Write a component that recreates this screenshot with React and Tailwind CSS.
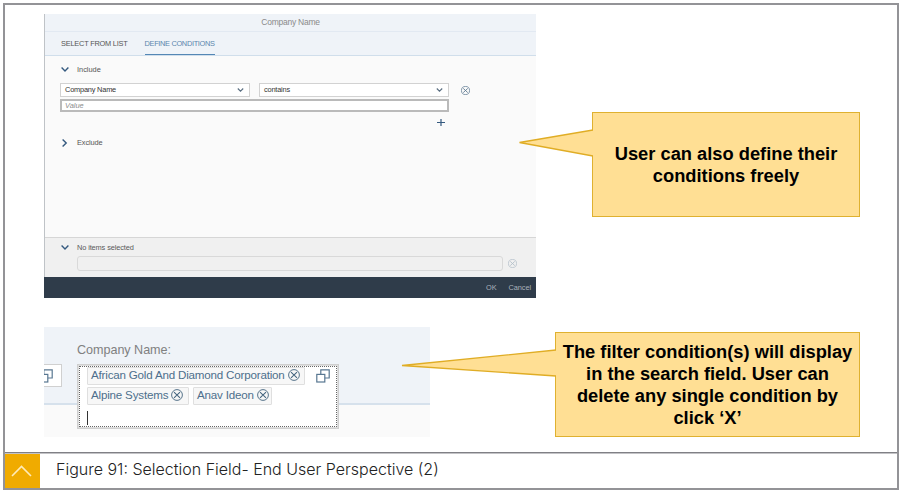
import React from "react";

function ChevronDown({ className = "w-[8px] h-[5px]", color = "#34597f", w = 1.4 }) {
  return (
    <svg className={className} viewBox="0 0 8 5" fill="none" stroke={color} strokeWidth={w}>
      <path d="M0.6 0.6 L4 4 L7.4 0.6" />
    </svg>
  );
}

function CircleX({ className, color = "#5c7890", w = 0.9 }) {
  return (
    <svg className={className} viewBox="0 0 12 12" fill="none" stroke={color} strokeWidth={w}>
      <circle cx="6" cy="6" r="5.4" />
      <path d="M3 3.2 L9 8.8 M9 3.2 L3 8.8" strokeWidth={w * 1.2} />
    </svg>
  );
}

function ValueHelp({ className }) {
  return (
    <svg className={className} viewBox="0 0 14 14" fill="none" stroke="#587791" strokeWidth="1.2">
      <path d="M4.8 5.4 V0.8 H13.2 V9 H8.8" />
      <rect x="0.8" y="5.4" width="8" height="7.6" />
    </svg>
  );
}

function Select({ label }) {
  return (
    <div className="flex h-[14px] w-[190px] items-center justify-between border border-[#d2d2d2] bg-white pr-[5px] pl-[4px]">
      <span className="text-[7.4px] leading-none tracking-[-0.2px] text-[#333]">{label}</span>
      <ChevronDown className="h-[4px] w-[7px]" color="#5b6f82" w={1.4} />
    </div>
  );
}

function Token({ children, className }) {
  return (
    <div className={`flex h-[18px] items-center gap-[3px] rounded-[1px] border border-[#dfdfdf] bg-[#f7f7f7] pb-[2px] pl-[3px] whitespace-nowrap ${className}`}>
      <span className="text-[11.6px] leading-none tracking-[-0.19px] text-[#4d6f8c]">{children}</span>
      <CircleX className="h-[12px] w-[12px] shrink-0" color="#45657f" w={0.9} />
    </div>
  );
}

function DefineConditionsDialog() {
  return (
    <div className="flex h-[284px] w-[492px] shrink-0 flex-col border-l border-[#bfc3c7] bg-[#fafafa]">
      <div className="flex h-[17px] shrink-0 items-center justify-center bg-[#eff3f8] text-[8.5px] leading-none tracking-[-0.25px] text-[#8a8a8a]">
        <span>Company Name</span>
      </div>
      <div className="flex h-[25px] shrink-0 gap-[16.5px] border-t border-b border-t-[#e2e9f2] border-b-[#d0deeb] bg-[#eff3f8] pl-[16px] text-[7.4px] leading-none tracking-[-0.22px]">
        <span className="w-[67px] pt-[8px] whitespace-nowrap text-[#555]">SELECT FROM LIST</span>
        <span className="w-[70px] border-b border-[#5487b5] pt-[8px] tracking-[-0.32px] whitespace-nowrap text-[#5b86ad]">DEFINE CONDITIONS</span>
      </div>

      <div className="flex h-[181px] shrink-0 flex-col pl-[15px] text-[7.4px] leading-none tracking-[-0.2px] text-[#555]">
        <div className="mt-[10px] flex h-[7px] items-center gap-[8px] pl-px">
          <ChevronDown />
          <span className="tracking-normal">Include</span>
        </div>
        <div className="mt-[10px] flex items-center">
          <Select label="Company Name" />
          <div className="w-[9px]" />
          <Select label="contains" />
          <CircleX className="ml-[12px] h-[9px] w-[9px]" w={1} />
        </div>
        <div className="mt-[2px] flex h-[13px] w-[389px] items-center border-2 border-[#bababa] bg-white pl-[3px] tracking-normal italic text-[#8c8c8c]">
          Value
        </div>
        <svg className="mt-[7px] ml-[377px] h-[7px] w-[8px]" viewBox="0 0 8 7" stroke="#34597f" strokeWidth="1.2">
          <path d="M0 3.5 H8 M4 0 V7" />
        </svg>
        <div className="mt-[13px] flex h-[7px] items-center gap-[8px] pl-px">
          <svg className="h-[8px] w-[8px]" viewBox="0 0 8 8" fill="none" stroke="#34597f" strokeWidth="1.4">
            <path d="M1.6 0.6 L5.2 4 L1.6 7.4" />
          </svg>
          <span className="tracking-[-0.1px]">Exclude</span>
        </div>
      </div>

      <div className="h-[40px] shrink-0 border-t border-[#d6d6d6] bg-[#f0f0f0] pl-[16px]">
        <div className="mt-[6px] flex h-[7px] items-center gap-[8px] text-[7.4px] leading-none tracking-[-0.12px] text-[#5a5a5a]">
          <ChevronDown />
          <span>No items selected</span>
        </div>
        <div className="mt-[5px] flex items-center gap-[5px] pl-[16px]">
          <div className="h-[15px] w-[426px] rounded-[3px] border border-[#d9d9d9]" />
          <CircleX className="h-[9px] w-[9px]" color="#b3bfca" w={1} />
        </div>
      </div>

      <div className="-ml-px flex h-[21px] shrink-0 items-center justify-end gap-[12px] bg-[#2f3c4a] pr-[5px] text-[7.4px] leading-none tracking-[-0.1px] text-[#a9b1ba]">
        <span>OK</span>
        <span>Cancel</span>
      </div>
    </div>
  );
}

function SearchField() {
  return (
    <div className="flex h-[110px] w-[386px] shrink-0 bg-[linear-gradient(to_bottom,#eff3f8_76px,#d6e1ec_76px,#d6e1ec_78px,#fafafa_78px)]">
      <div className="mt-[37px] flex h-[23px] w-[18px] items-center overflow-hidden border border-l-0 border-[#d0d0d0] bg-white">
        <ValueHelp className="-ml-[5px] h-[14px] w-[14px] shrink-0" />
      </div>
      <div className="ml-[15px] w-[262px] pt-[17px]">
        <div className="h-[20px] text-[12.6px] leading-[13px] tracking-[-0.04px] text-[#808080]">Company Name:</div>
        <div className="h-[65px] border border-[#cfcfcf] bg-[#dedede] p-px">
          <div className="flex h-full justify-between border border-dotted border-[#666] bg-white pr-[6px] pl-[7px]">
            <div className="flex w-[220px] flex-col">
              <Token className="w-[218px]">African Gold And Diamond Corporation</Token>
              <div className="mt-[2px] flex gap-[4px]">
                <Token className="w-[102px]">Alpine Systems</Token>
                <Token className="w-[79px]">Anav Ideon</Token>
              </div>
              <div className="mt-[6px] h-[14px] w-px bg-[#333]" />
            </div>
            <ValueHelp className="mt-[2px] h-[14px] w-[14px]" />
          </div>
        </div>
      </div>
    </div>
  );
}

function FreeConditionsCallout() {
  return (
    <div className="relative mt-[98px] ml-[56px] flex h-[105px] w-[268px] items-center justify-center border border-[#dfb130] bg-[#ffdf94] pt-[1px] text-center text-[18.3px] leading-[22px] font-bold text-black">
      <svg className="absolute top-[16px] -left-[75px] h-[28px] w-[75px]" viewBox="0 0 75 28" fill="#ffdf94" stroke="#e0ad25" strokeWidth="1.3">
        <path d="M75 1 L1.5 13.5 L75 27" />
      </svg>
      <p>
        User can also define their
        <br />
        conditions freely
      </p>
    </div>
  );
}

function FilterCallout() {
  return (
    <div className="relative mt-[5px] ml-[125px] flex h-[105px] w-[305px] items-center justify-center border border-[#dfb130] bg-[#ffdf94] text-center text-[18.3px] leading-[22px] font-bold whitespace-nowrap text-black">
      <svg className="absolute top-[16px] -left-[156px] h-[28px] w-[156px]" viewBox="0 0 156 28" fill="#ffdf94" stroke="#e0ad25" strokeWidth="1.3">
        <path d="M156 1 L2 16.5 L156 27" />
      </svg>
      <p>
        The filter condition(s) will display
        <br />
        in the search field. User can
        <br />
        delete any single condition by
        <br />
        click ‘X’
      </p>
    </div>
  );
}

export default function App() {
  return (
    <div className="h-[493px] w-[901px] overflow-hidden bg-white pt-[3px] pl-[3px] font-['Liberation_Sans',Arial,sans-serif]">
      <div className="flex h-[487px] w-[896px] flex-col border-2 border-[#939397]">
        <div className="h-[447px] shrink-0 pt-[9px] pl-[39px]">
          <div className="flex">
            <DefineConditionsDialog />
            <FreeConditionsCallout />
          </div>
          <div className="mt-[29px] flex">
            <SearchField />
            <FilterCallout />
          </div>
        </div>
        <div className="h-px bg-[#808085]" />
        <div className="h-px bg-[#c3c3c6]" />
        <div className="flex flex-1 items-stretch">
          <div className="flex w-[35px] items-center justify-center bg-[#f0ab00] pr-[2px]">
            <svg className="h-[12px] w-[21px]" viewBox="0 0 21 12" fill="none" stroke="#ffebb8" strokeWidth="1.6">
              <path d="M1 11 L10.5 1.5 L20 11" />
            </svg>
          </div>
          <div className="flex items-center pb-[4px] pl-[16px] font-['Inter','Open_Sans',sans-serif] text-[16px] leading-none font-light whitespace-nowrap text-[#222]">
            Figure 91: Selection Field- End User Perspective (2)
          </div>
        </div>
      </div>
    </div>
  );
}
